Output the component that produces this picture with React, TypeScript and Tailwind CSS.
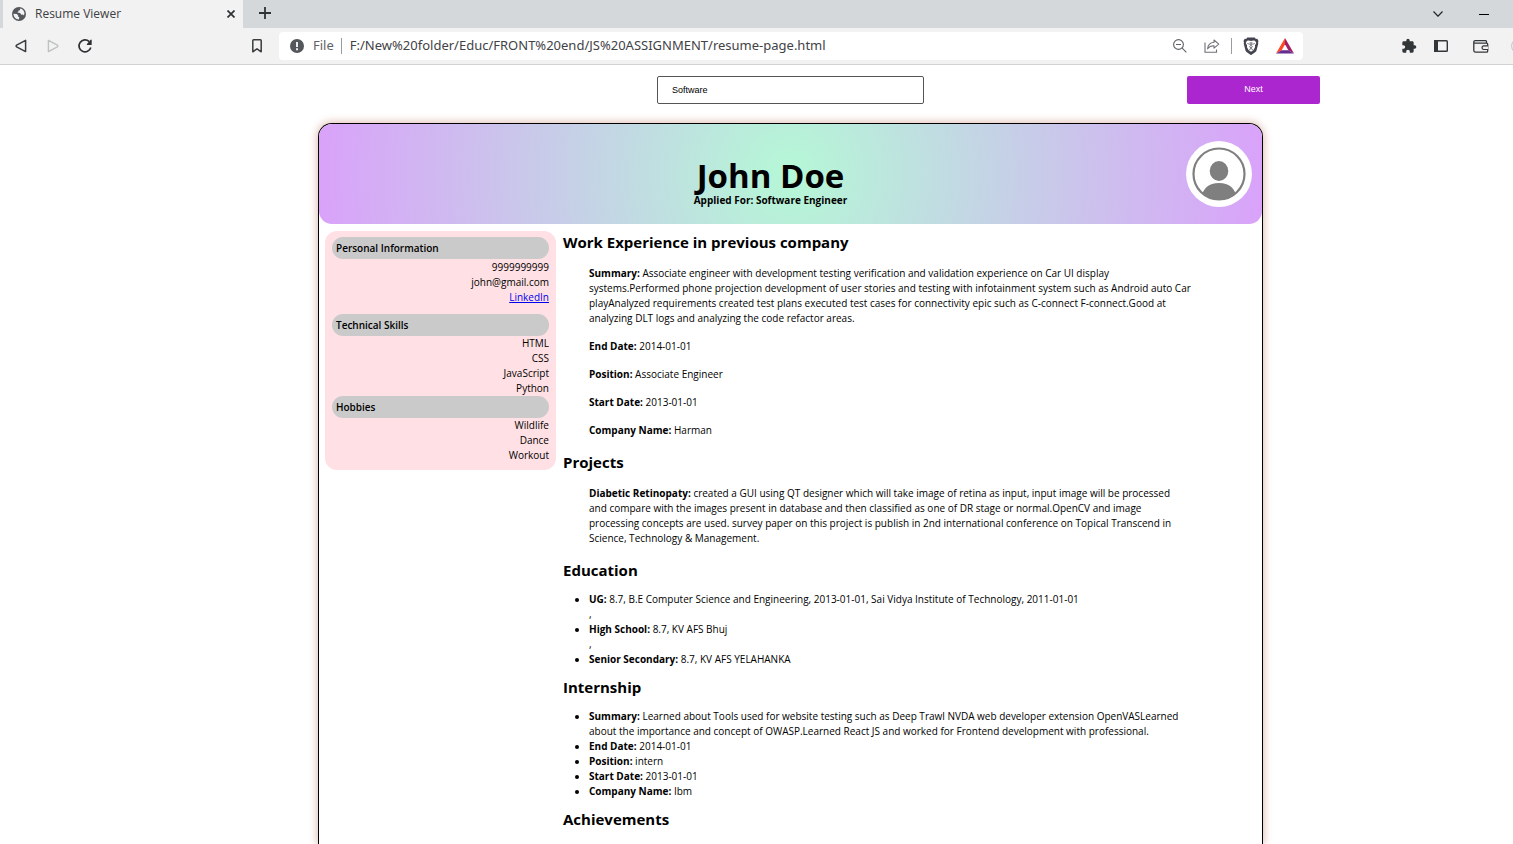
import type { ReactNode } from "react";

type Entry = { label: string; text: string; trailing?: string };

const workExperience: Entry[] = [
  {
    label: "Summary:",
    text: "Associate engineer with development testing verification and validation experience on Car UI display\nsystems.Performed phone projection development of user stories and testing with infotainment system such as Android auto Car\nplayAnalyzed requirements created test plans executed test cases for connectivity epic such as C-connect F-connect.Good at\nanalyzing DLT logs and analyzing the code refactor areas.",
  },
  { label: "End Date:", text: "2014-01-01" },
  { label: "Position:", text: "Associate Engineer" },
  { label: "Start Date:", text: "2013-01-01" },
  { label: "Company Name:", text: "Harman" },
];

const projects: Entry[] = [
  {
    label: "Diabetic Retinopaty:",
    text: "created a GUI using QT designer which will take image of retina as input, input image will be processed\nand compare with the images present in database and then classified as one of DR stage or normal.OpenCV and image\nprocessing concepts are used. survey paper on this project is publish in 2nd international conference on Topical Transcend in\nScience, Technology & Management.",
  },
];

const education: Entry[] = [
  {
    label: "UG:",
    text: "8.7, B.E Computer Science and Engineering, 2013-01-01, Sai Vidya Institute of Technology, 2011-01-01",
    trailing: ",",
  },
  { label: "High School:", text: "8.7, KV AFS Bhuj", trailing: "," },
  { label: "Senior Secondary:", text: "8.7, KV AFS YELAHANKA" },
];

const internship: Entry[] = [
  {
    label: "Summary:",
    text: "Learned about Tools used for website testing such as Deep Trawl NVDA web developer extension OpenVASLearned\nabout the importance and concept of OWASP.Learned React JS and worked for Frontend development with professional.",
  },
  { label: "End Date:", text: "2014-01-01" },
  { label: "Position:", text: "intern" },
  { label: "Start Date:", text: "2013-01-01" },
  { label: "Company Name:", text: "Ibm" },
];

function IconButton({ label, className, children }: { label: string; className?: string; children: ReactNode }) {
  return (
    <button type="button" aria-label={label} className={`flex h-4 shrink-0 items-center justify-center ${className ?? ""}`}>
      {children}
    </button>
  );
}

function TabStrip() {
  return (
    <div className="flex h-7 items-stretch bg-[#d4d8db] pl-[3px]">
      <div className="flex w-60 items-center bg-[#f2f2f2] pr-2 pl-[9px]">
        <svg width="14" height="14" viewBox="0 0 14 14" aria-hidden="true">
          <circle cx="7" cy="7" r="7" fill="#54575b" />
          <path
            d="M1.500 6.800 4.800 7.100 6.200 8.400 6 9.600 7.300 10.300 6.900 12.500C3.800 12.400 1.500 10 1.500 6.800ZM8.200 1.600 7.900 3.200 6.200 3.700 6.400 5 4.900 5.600 8.200 5.900 9.200 7.700 11 7.500 11.500 8.600 12.500 7C12.600 4.200 10.600 2 8.200 1.600Z"
            fill="#f2f2f2"
          />
        </svg>
        <span className="ml-[9px] flex-1 text-xs text-[#3c4043]">Resume Viewer</span>
        <IconButton label="Close tab" className="w-2">
          <svg width="8" height="8" viewBox="0 0 8 8" aria-hidden="true">
            <path d="m.5.5 7 7m0-7-7 7" stroke="#2f3235" strokeWidth="1.700" />
          </svg>
        </IconButton>
      </div>
      <IconButton label="New tab" className="mt-[5px] ml-4 w-3">
        <svg width="12" height="12" viewBox="0 0 12 12" aria-hidden="true">
          <path d="M6 0v12M0 6h12" stroke="#2f3235" strokeWidth="1.800" />
        </svg>
      </IconButton>
      <div className="ml-auto flex items-center gap-9 pr-6">
        <IconButton label="Search tabs" className="w-[10px]">
          <svg width="10" height="6" viewBox="0 0 10 6" aria-hidden="true">
            <path d="m.5.5 4.500 4.700L9.500.5" fill="none" stroke="#222" strokeWidth="1.200" />
          </svg>
        </IconButton>
        <IconButton label="Minimize" className="w-[10px]">
          <svg width="10" height="1" viewBox="0 0 10 1" aria-hidden="true">
            <path d="M0 .5h10" stroke="#000" />
          </svg>
        </IconButton>
      </div>
    </div>
  );
}

function Toolbar() {
  return (
    <div className="flex h-[37px] items-center overflow-hidden border-b border-[#d0d2d3] bg-[#f2f2f2] pl-[15px]">
      <IconButton label="Back" className="w-3">
        <svg width="12" height="14" viewBox="0 0 12 14" aria-hidden="true">
          <path d="M10.600 1.400v11.200L1.600 7.800q-1-.8 0-1.600Z" fill="none" stroke="#3a3d40" strokeWidth="1.500" strokeLinejoin="round" />
        </svg>
      </IconButton>
      <IconButton label="Forward" className="ml-5 w-3">
        <svg width="12" height="14" viewBox="0 0 12 14" aria-hidden="true">
          <path d="M1.400 1.400v11.200l9-4.800q1-.8 0-1.600Z" fill="none" stroke="#bfc1c3" strokeWidth="1.400" strokeLinejoin="round" />
        </svg>
      </IconButton>
      <IconButton label="Reload" className="ml-[18px] w-4">
        <svg width="16" height="16" viewBox="0 0 16 16" aria-hidden="true">
          <path d="M12.200 3.600A6 6 0 1 0 13.800 9.500" fill="none" stroke="#2f3235" strokeWidth="1.700" />
          <path d="M14.700 2v4.500q0 .5-.5.500H10.300q-1-.2-.3-1l3.600-4.200q.8-.7 1.100.2Z" fill="#2f3235" />
        </svg>
      </IconButton>
      <IconButton label="Bookmark" className="ml-[159px] w-[10px]">
        <svg width="10" height="14" viewBox="0 0 10 14" aria-hidden="true">
          <path d="M.8 1.600q0-.8.8-.8h6.800q.8 0 .8.8v11.200L5 9.800.8 12.800Z" fill="none" stroke="#3a3d40" strokeWidth="1.500" strokeLinejoin="round" />
        </svg>
      </IconButton>
      <div className="ml-[17px] flex h-7 flex-1 items-center rounded-sm bg-white pr-[9px] pl-[11px]">
        <svg className="shrink-0" width="14" height="14" viewBox="0 0 14 14" aria-hidden="true">
          <circle cx="7" cy="7" r="7" fill="#54575b" />
          <path d="M7 3v5M7 9.300v1.900" stroke="#fff" strokeWidth="1.800" />
        </svg>
        <span className="ml-[9px] font-['Noto_Sans',sans-serif] text-[13px] text-[#5f6368]">File</span>
        <span className="mr-2 ml-[7px] h-4 w-px bg-[#9a9da0]" />
        <input
          aria-label="Address"
          className="min-w-0 flex-1 bg-transparent font-['Noto_Sans',sans-serif] text-[13px] text-[#3f4246] outline-none"
          defaultValue="F:/New%20folder/Educ/FRONT%20end/JS%20ASSIGNMENT/resume-page.html"
        />
        <IconButton label="Zoom" className="w-[14px]">
          <svg width="14" height="14" viewBox="0 0 14 14" aria-hidden="true">
            <path d="M9.200 9.200 13.400 13.400M3 5.500h5" fill="none" stroke="#5f6368" strokeWidth="1.100" />
            <circle cx="5.500" cy="5.500" r="4.900" fill="none" stroke="#5f6368" strokeWidth="1.100" />
          </svg>
        </IconButton>
        <IconButton label="Share" className="ml-[17px] w-4">
          <svg width="16" height="14" viewBox="0 0 16 14" aria-hidden="true">
            <path d="M1 3.500v9.800h11.500v-2.800" fill="none" stroke="#6d7074" strokeWidth="1.100" />
            <path d="M10 1l4.800 4.100L10 9.100V6.700C7.300 6.600 5.300 7.400 3.600 9.800 4 6 6.300 3.600 10 3.300Z" fill="none" stroke="#6d7074" strokeWidth="1.100" strokeLinejoin="round" />
          </svg>
        </IconButton>
        <span className="mx-[11px] h-4 w-px bg-[#9a9da0]" />
        <IconButton label="Shields" className="w-4">
          <svg width="16" height="18" viewBox="0 0 16 18" aria-hidden="true">
            <path d="M4.300.6h7.400l1.200 1.400 1.400-.2 1.200 2.100-.5 1.500.3 1-1.800 7q-.4 1.200-1.400 1.900L8.600 17.700q-.6.4-1.200 0L3.900 15.300q-1-.7-1.400-1.900L.7 6.400l.3-1L.5 3.900l1.200-2.100 1.400.2Z" fill="#43444f" />
            <path d="M4 3.800 5.800 3.400 8 3.900l2.200-.5 1.800.4 1.300 2.200-1.400 2.500.2 1.500-1.600 3L8 14.800 5.500 13 3.900 10l.2-1.500L2.700 6Z" fill="#fff" />
            <path d="m4.300 6.500 2.400.8M11.700 6.500l-2.400.8M7.100 5l.4 3.600-.9 1.300L8 10.900l1.400-1-.9-1.300L8.900 5M8 11v1M6.200 12.600 8 11.700l1.800.9" fill="none" stroke="#43444f" strokeWidth=".7" />
          </svg>
        </IconButton>
        <IconButton label="Rewards" className="ml-[17px] w-[18px]">
          <svg width="18" height="16" viewBox="0 0 18 16" aria-hidden="true">
            <path d="M9 0 0 15.500 5.700 12.300 9 6.300Z" fill="#ff4724" />
            <path d="M9 0 18 15.500 12.300 12.300 9 6.300Z" fill="#9e1f63" />
            <path d="M0 15.500h18l-5.700-3.200H5.700Z" fill="#662d91" />
          </svg>
        </IconButton>
      </div>
      <div className="ml-[98px] flex w-28 shrink-0 items-center">
        <IconButton label="Extensions" className="w-4">
          <svg width="16" height="16" viewBox="0 0 24 24" aria-hidden="true">
            <path
              d="M20.500 11H19V7c0-1.100-.9-2-2-2h-4V3.500a2.500 2.500 0 0 0-5 0V5H4c-1.100 0-1.990.9-1.990 2v3.800H3.500c1.490 0 2.700 1.210 2.700 2.700s-1.210 2.700-2.700 2.700H2V20c0 1.100.9 2 2 2h3.800v-1.500c0-1.490 1.210-2.700 2.700-2.700s2.700 1.210 2.700 2.700V22H17c1.100 0 2-.9 2-2v-4h1.500a2.500 2.500 0 0 0 0-5Z"
              fill="#333639"
            />
          </svg>
        </IconButton>
        <IconButton label="Sidebar" className="ml-[17px] w-[14px]">
          <svg width="14" height="12" viewBox="0 0 14 12" aria-hidden="true">
            <rect x=".7" y=".7" width="12.600" height="10.600" rx=".8" fill="none" stroke="#333639" strokeWidth="1.400" />
            <path d="M0 0h4v12H0Z" fill="#333639" />
          </svg>
        </IconButton>
        <IconButton label="Wallet" className="ml-[25px] w-4">
          <svg width="16" height="13" viewBox="0 0 16 13" aria-hidden="true">
            <path d="M13.500 2.800V1.500q0-.8-.8-.8H2.300Q.8.700.8 2.200v8.300q0 1.700 1.700 1.700h11q1.200 0 1.200-1.200V4.300q0-1.200-1.200-1.200H2Q.9 3.100.8 2.200" fill="none" stroke="#333639" strokeWidth="1.300" />
            <path d="M15 5.800h-4.500a1.900 1.900 0 0 0 0 3.700H15" fill="#f2f2f2" stroke="#333639" strokeWidth="1.200" />
          </svg>
        </IconButton>
        <IconButton label="Profile" className="ml-[22px] w-4">
          <svg width="16" height="16" viewBox="0 0 16 16" aria-hidden="true">
            <circle cx="8" cy="8" r="7.400" fill="none" stroke="#c2c4c6" />
          </svg>
        </IconButton>
      </div>
    </div>
  );
}

function PanelHeading({ children }: { children: ReactNode }) {
  return (
    <h3 className="h-[22px] rounded-full bg-[#cacaca] px-1 text-left text-[10px] leading-[22px] font-semibold">
      {children}
    </h3>
  );
}

function SectionHeading({ children }: { children: ReactNode }) {
  return <h2 className="text-[15px] leading-5 font-bold">{children}</h2>;
}

function EntryText({ entry }: { entry: Entry }) {
  return (
    <>
      <b className="font-bold">{entry.label}</b> {entry.text}
    </>
  );
}

function BulletList({ entries }: { entries: Entry[] }) {
  return (
    <ul className="mt-3 mb-[10px] list-disc pl-[26px]">
      {entries.map((entry) => (
        <li key={entry.label} className="whitespace-pre-line">
          <EntryText entry={entry} />
          {entry.trailing && <span className="block">{entry.trailing}</span>}
        </li>
      ))}
    </ul>
  );
}

function Paragraphs({ entries }: { entries: Entry[] }) {
  return (
    <div className="my-[14px] flex flex-col gap-[13px] pl-[26px]">
      {entries.map((entry) => (
        <p key={entry.label} className="whitespace-pre-line">
          <EntryText entry={entry} />
        </p>
      ))}
    </div>
  );
}

function Resume() {
  return (
    <article className="w-[65.4%] grow rounded-t-[14px] border border-b-0 border-black bg-white shadow-[0_0_8px_1px_#e0bcb0]">
      <header className="flex h-[100px] items-center rounded-[13px] bg-[radial-gradient(circle,#b5f8d6_0%,#d9a2fa_100%)] pr-[10px] pl-9">
        <div className="flex-1 pt-4 text-center">
          <h1 className="text-[33px] leading-9 font-bold">John Doe</h1>
          <p className="text-[10px] leading-3 font-bold">Applied For: Software Engineer</p>
        </div>
        <svg width="66" height="66" viewBox="0 0 66 66" role="img" aria-label="Profile picture">
          <defs>
            <clipPath id="portrait">
              <circle cx="33" cy="33" r="26" />
            </clipPath>
          </defs>
          <circle cx="33" cy="33" r="33" fill="#fff" />
          <g clipPath="url(#portrait)" fill="#7f7f7f">
            <ellipse cx="33" cy="30" rx="9.300" ry="10" />
            <path d="M15 62C15 48 22 42 33 42s18 6 18 20Z" />
          </g>
          <circle cx="33" cy="33" r="25.500" fill="none" stroke="#7f7f7f" strokeWidth="2.200" />
        </svg>
      </header>
      <div className="flex items-start gap-[7px] pt-[7px] pl-[6px] text-[10px] leading-[15px]">
        <aside className="w-[231px] shrink-0 rounded-xl bg-[#ffe0e4] px-[7px] pt-[6px] pb-[7px] text-right">
          <PanelHeading>Personal Information</PanelHeading>
          <ul className="pt-px pb-[9px]">
            <li>9999999999</li>
            <li>john@gmail.com</li>
            <li>
              <a href="#linkedin" className="text-[#0000ee] underline">
                LinkedIn
              </a>
            </li>
          </ul>
          <PanelHeading>Technical Skills</PanelHeading>
          <ul>
            <li>HTML</li>
            <li>CSS</li>
            <li>JavaScript</li>
            <li>Python</li>
          </ul>
          <PanelHeading>Hobbies</PanelHeading>
          <ul>
            <li>Wildlife</li>
            <li>Dance</li>
            <li>Workout</li>
          </ul>
        </aside>
        <main className="flex-1 pt-px pr-[60px]">
          <SectionHeading>Work Experience in previous company</SectionHeading>
          <Paragraphs entries={workExperience} />
          <SectionHeading>Projects</SectionHeading>
          <Paragraphs entries={projects} />
          <SectionHeading>Education</SectionHeading>
          <BulletList entries={education} />
          <SectionHeading>Internship</SectionHeading>
          <BulletList entries={internship} />
          <SectionHeading>Achievements</SectionHeading>
        </main>
      </div>
    </article>
  );
}

export default function App() {
  return (
    <div className="flex h-screen flex-col overflow-hidden bg-white font-['Open_Sans','Noto_Sans',sans-serif] text-black">
      <TabStrip />
      <Toolbar />
      <div className="flex grow flex-col items-center pl-[68px]">
        <div className="grid w-full grid-cols-3 justify-items-center px-7 pt-[11px] pb-[19px]">
          <input
            aria-label="Job filter"
            defaultValue="Software"
            className="col-start-2 h-7 w-[267px] rounded-xs border border-[#555] px-[14px] font-['Liberation_Sans',Arial,sans-serif] text-[9px] outline-none"
          />
          <button type="button" className="h-7 w-[133px] rounded-xs bg-[#ac26d0] font-['Liberation_Sans',Arial,sans-serif] text-[9px] text-white">
            Next
          </button>
        </div>
        <Resume />
      </div>
    </div>
  );
}
